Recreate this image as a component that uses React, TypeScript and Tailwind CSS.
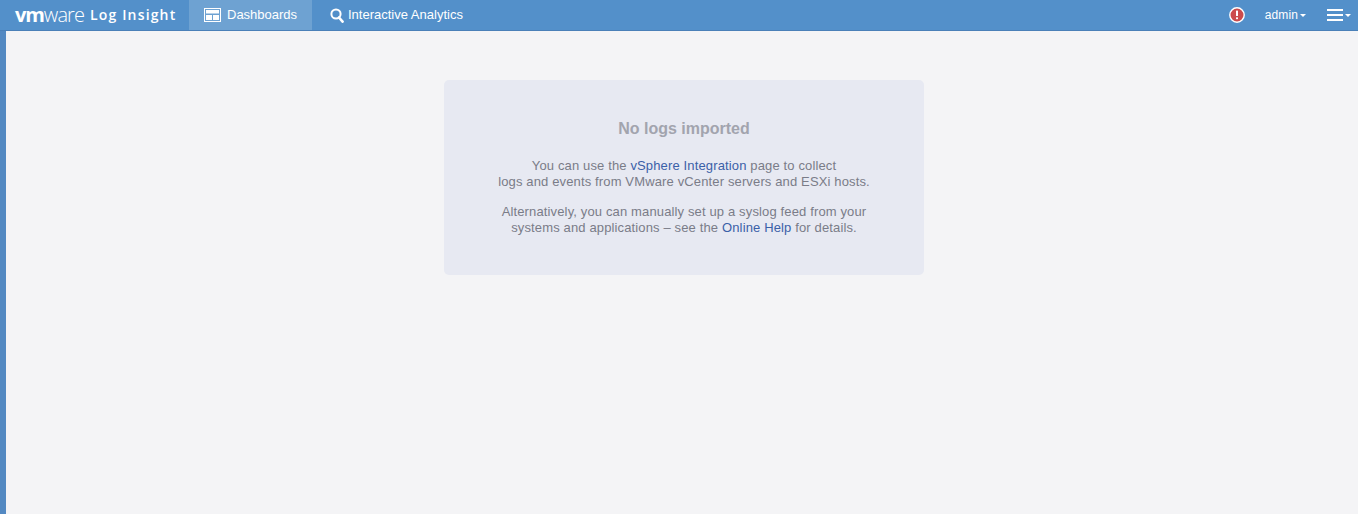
function DashboardIcon() {
  return (
    <svg width="17" height="14" viewBox="0 0 17 14" className="shrink-0">
      <rect x="0.5" y="0.5" width="16" height="13" fill="none" stroke="#fff" />
      <rect x="2" y="2" width="13" height="3.5" fill="#fff" />
      <rect x="2" y="7" width="6" height="5" fill="#fff" />
      <rect x="9" y="7" width="6" height="5" fill="#fff" />
    </svg>
  )
}

function SearchIcon() {
  return (
    <svg width="14" height="15" viewBox="0 0 14 15" fill="none" stroke="#fff" className="shrink-0">
      <circle cx="6" cy="6" r="4.6" strokeWidth="2" />
      <path d="M9 9.5 L12.6 13.6" strokeWidth="2.6" strokeLinecap="round" />
    </svg>
  )
}

function AlertIcon() {
  return (
    <svg width="16" height="16" viewBox="0 0 16 16" className="shrink-0">
      <circle cx="8" cy="8" r="7.2" fill="#cc4b4c" stroke="#fff" strokeWidth="1.4" />
      <rect x="7" y="3.5" width="2" height="5.5" rx="0.6" fill="#fff" />
      <rect x="7" y="10.2" width="2" height="2" rx="0.6" fill="#fff" />
    </svg>
  )
}

function Caret() {
  return <span className="ml-[2px] mt-[1px] h-0 w-0 border-x-[3px] border-t-[3px] border-x-transparent border-t-white" />
}

export default function App() {
  return (
    <div className="flex h-[514px] flex-col overflow-hidden bg-[#f4f4f6] font-['Liberation_Sans',Arial,sans-serif] text-[13px]">
      <header className="flex h-[31px] shrink-0 items-stretch border-b border-[#4a80b8] bg-[#5390ca] text-white">
        <div className="flex w-[189px] items-center pl-[15px] pb-[1px]">
          <span className="font-['Open_Sans',sans-serif] text-[20px] leading-none font-bold tracking-[-1.1px]">vm</span>
          <span className="font-['Open_Sans',sans-serif] text-[20px] leading-none font-light tracking-[-0.9px]">ware</span>
          <span className="ml-[6px] font-['Open_Sans',sans-serif] text-[14px] leading-none font-semibold tracking-[1.15px]">Log Insight</span>
        </div>
        <div className="flex w-[123px] items-center gap-[6px] bg-[#6ea2d2] pl-[15px]">
          <DashboardIcon />
          <span>Dashboards</span>
        </div>
        <div className="flex items-center gap-[4px] pl-[18px]">
          <SearchIcon />
          <span>Interactive Analytics</span>
        </div>
        <div className="ml-auto flex items-center">
          <AlertIcon />
          <div className="ml-[20px] flex items-center text-[12px] tracking-[0.1px]">
            <span>admin</span>
            <Caret />
          </div>
          <div className="mr-[7px] ml-[21px] flex items-center">
            <div className="flex w-[16px] flex-col gap-[3px]">
              <span className="h-[2px] bg-white" />
              <span className="h-[2px] bg-white" />
              <span className="h-[2px] bg-white" />
            </div>
            <Caret />
          </div>
        </div>
      </header>
      <div className="flex flex-1">
        <div className="w-[6px] shrink-0 bg-[#5389c2]" />
        <main className="flex flex-1 justify-center pt-[49px] pl-[4px]">
          <section className="h-[195px] w-[480px] rounded-[5px] bg-[#e7e9f2] text-center leading-[16px] tracking-[0.14px] text-[#7a7c88]">
            <h2 className="mt-[39px] text-[16px] leading-[20px] font-bold tracking-normal text-[#a2a4ae]">No logs imported</h2>
            <p className="mt-[19px]">
              You can use the <a className="text-[#3b60a8]">vSphere Integration</a> page to collect
              <br />
              logs and events from VMware vCenter servers and ESXi hosts.
            </p>
            <p className="mt-[14px]">
              Alternatively, you can manually set up a syslog feed from your
              <br />
              systems and applications – see the <a className="text-[#3b60a8]">Online Help</a> for details.
            </p>
          </section>
        </main>
      </div>
    </div>
  )
}
